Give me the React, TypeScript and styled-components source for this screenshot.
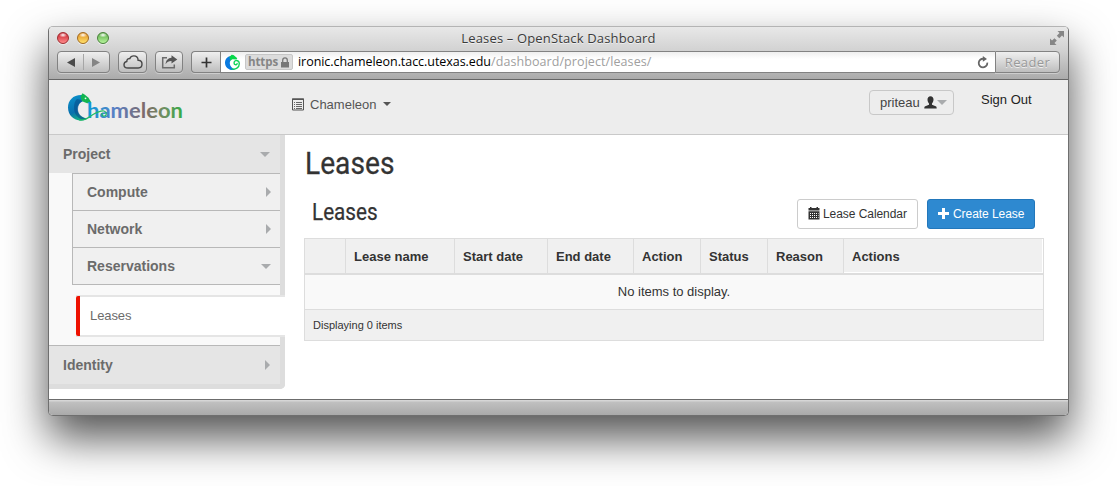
import React from "react";
import styled, { createGlobalStyle, css } from "styled-components";

const GlobalStyle = createGlobalStyle`
  *, *::before, *::after { box-sizing: border-box; }
  html, body { margin: 0; background: #fff; overflow: hidden; }
  body { font-family: "Liberation Sans", Arial, sans-serif; font-size: 13px; color: #333; }
  svg { display: block; flex: none; }
`;

const Desktop = styled.div`
  width: 1117px;
  height: 486px;
  padding: 26px 48px 0;
  overflow: hidden;
`;

const Window = styled.div`
  width: 1021px;
  height: 390px;
  display: flex;
  flex-direction: column;
  border: 1px solid #6f6f6f;
  border-top-color: #b4b4b4;
  border-radius: 5px;
  overflow: hidden;
  background: #fff;
  box-shadow: 0 22px 44px rgba(0, 0, 0, 0.68);
`;

const Chrome = styled.div`
  flex: none;
  height: 53px;
  background: linear-gradient(#e8e8e8, #d2d2d2 45%, #ababab);
  border-bottom: 1px solid #666;
`;

const TitleBar = styled.div`
  display: grid;
  grid-template-columns: 120px 1fr 120px;
  align-items: center;
  height: 24px;
`;

const Lights = styled.div`
  display: flex;
  gap: 8px;
  padding-left: 8px;
  margin-top: -2px;
`;

const Light = styled.span<{ $edge: string; $from: string; $to: string }>`
  width: 12px;
  height: 12px;
  border-radius: 50%;
  border: 1px solid ${(p) => p.$edge};
  background: radial-gradient(ellipse 4px 2.5px at 50% 20%, #fff, transparent),
    linear-gradient(${(p) => p.$from}, ${(p) => p.$to});
  box-shadow: 0 1px 0 rgba(255, 255, 255, 0.5);
`;

const WindowTitle = styled.div`
  font: 13px/22px "Open Sans", sans-serif;
  letter-spacing: 0.15px;
  margin-top: -2px;
  text-align: center;
  color: #3b3b3b;
  text-shadow: 0 1px 0 rgba(255, 255, 255, 0.6);
  white-space: nowrap;
`;

const Expand = styled.div`
  display: flex;
  justify-content: flex-end;
  padding-right: 4px;
  margin-top: -2px;
`;

const ToolRow = styled.div`
  display: flex;
  height: 22px;
  padding: 0 8px;
`;

const ToolButton = styled.div<{ $w: number; $gap?: number; $side?: "left" | "right" }>`
  width: ${(p) => p.$w}px;
  margin-right: ${(p) => p.$gap ?? 0}px;
  display: flex;
  align-items: center;
  justify-content: center;
  border: 1px solid #828282;
  border-radius: ${(p) => (p.$side === "left" ? "4px 0 0 4px" : p.$side === "right" ? "0 4px 4px 0" : "4px")};
  background: linear-gradient(#efefef, #bebebe);
  box-shadow: 0 1px 0 rgba(255, 255, 255, 0.35);
  ${(p) => p.$side === "left" && css`border-right-width: 0;`}
  color: #999;
  font: 13px/20px "Open Sans", sans-serif;
  letter-spacing: 0.4px;
  text-shadow: 0 1px 0 #eee;
`;

const AddressBar = styled.div`
  flex: 1;
  display: flex;
  align-items: center;
  padding: 0 6px 0 3px;
  border: 1px solid #828282;
  border-right: 0;
  background: linear-gradient(#efefef, #fff 35%);
  font: 12.5px/20px "Open Sans", sans-serif;
  white-space: nowrap;
`;

const Secure = styled.span`
  display: flex;
  align-items: center;
  gap: 3px;
  width: 48px;
  height: 16px;
  margin: 0 5px 0 4px;
  padding-left: 2px;
  border: 1px solid #c6c6c6;
  border-radius: 2px;
  background: #dcdcdc;
  color: #858585;
  font: bold 11.5px/14px "Open Sans", sans-serif;
  letter-spacing: -0.1px;
`;

const Domain = styled.span`
  color: #000;
  letter-spacing: -0.05px;
`;

const Path = styled.span`
  flex: 1;
  color: #a0a0a0;
  letter-spacing: 0.08px;
`;

const SiteHeader = styled.header`
  flex: none;
  display: flex;
  height: 55px;
  padding-left: 18px;
  background: #ededed;
  border-bottom: 1px solid #c9c9c9;
`;

const Brand = styled.div`
  width: 225px;
  padding-top: 11px;
`;

const ProjectPicker = styled.div`
  display: flex;
  align-items: center;
  height: 16px;
  margin-top: 16px;
  flex: 1;
  color: #555;
`;

const PickerLabel = styled.span`
  margin: 0 6px 0 5px;
`;

const UserButton = styled.div`
  display: flex;
  align-items: center;
  width: 85px;
  height: 25px;
  margin: 10px 27px 0 0;
  padding-left: 10px;
  border: 1px solid #c8c8c8;
  border-radius: 4px;
  color: #444;
`;

const UserName = styled.span`
  margin-right: 4px;
`;

const SignOut = styled.span`
  width: 87px;
  margin-top: 12px;
  line-height: 15px;
  color: #222;
`;

const Caret = styled.span<{ $dir: "down" | "right"; $size?: number; $color?: string }>`
  width: 0;
  height: 0;
  flex: none;
  border: ${(p) => p.$size ?? 5}px solid transparent;
  ${(p) =>
    p.$dir === "down"
      ? css`border-bottom: 0; border-top-color: ${p.$color ?? "#a9abad"};`
      : css`border-right: 0; border-left-color: ${p.$color ?? "#a9abad"};`}
`;

const Body = styled.div`
  flex: 1;
  display: flex;
  min-height: 0;
`;

const Sidebar = styled.nav`
  width: 236px;
  height: 254px;
  display: flex;
  flex-direction: column;
  border-radius: 0 0 5px 0;
  overflow: hidden;
  color: #6b6b6b;
  font-size: 14px;
  font-weight: bold;
`;

const Section = styled.div<{ $last?: boolean }>`
  display: flex;
  align-items: center;
  justify-content: space-between;
  height: ${(p) => (p.$last ? 44 : 38)}px;
  padding: 0 10px 0 14px;
  background: #e5e5e5;
  border-right: 5px solid #ddd;
  ${(p) =>
    p.$last &&
    css`
      border-bottom: 5px solid #ddd;
      box-shadow: inset 0 1px 0 #b8b8b8;
    `}
`;

const Submenu = styled.div`
  padding-left: 23px;
  background: #f9f9f9;
  border-right: 5px solid #ddd;
`;

const SubItem = styled.div`
  display: flex;
  align-items: center;
  justify-content: space-between;
  height: 37px;
  padding: 0 9px 0 14px;
  background: #f0f0f0;
  border-top: 1px solid #b8b8b8;
  border-left: 1px solid #b8b8b8;
  &:last-child { height: 38px; border-bottom: 1px solid #b8b8b8; }
`;

const Spacer = styled.div<{ $h: number }>`
  height: ${(p) => p.$h}px;
  background: #f9f9f9;
  border-right: 5px solid #ddd;
`;

const ActiveWrap = styled.div`
  padding-left: 27px;
  background: #f9f9f9;
`;

const ActiveLink = styled.div`
  position: relative;
  height: 42px;
  padding-left: 14px;
  border: solid #e5e5e5;
  border-width: 2px 0;
  background: #fff;
  font-size: 13px;
  font-weight: normal;
  letter-spacing: -0.1px;
  line-height: 37px;
  &::before {
    content: "";
    position: absolute;
    left: 0;
    top: -1px;
    width: 4px;
    height: 40px;
    border-radius: 2px 0 0 2px;
    background: #ee1100;
  }
`;

const Main = styled.main`
  flex: 1;
  padding: 10px 24px 0 19px;
`;

const PageTitle = styled.h1`
  margin: 0 0 0 1px;
  height: 37px;
  font: 400 32px/36px Roboto, sans-serif;
  transform: scaleX(0.88);
  transform-origin: left;
  -webkit-text-stroke: 0.3px #333;
`;

const TableBar = styled.div`
  display: flex;
  height: 56px;
  padding: 17px 9px 0 8px;
`;

const TableTitle = styled.h2`
  flex: 1;
  margin: 0;
  font: 400 23.5px/27px Roboto, sans-serif;
  transform: scaleX(0.88);
  transform-origin: left;
  -webkit-text-stroke: 0.25px #333;
`;

const Button = styled.button<{ $primary?: boolean }>`
  display: flex;
  align-items: center;
  flex: none;
  height: 30px;
  width: ${(p) => (p.$primary ? 108 : 121)}px;
  margin-left: ${(p) => (p.$primary ? 9 : 0)}px;
  padding: 0 0 1px 10px;
  gap: ${(p) => (p.$primary ? 4 : 3)}px;
  border: 1px solid ${(p) => (p.$primary ? "#2277bb" : "#ccc")};
  border-radius: 3px;
  background: ${(p) => (p.$primary ? "#2e89d0" : "#fff")};
  color: ${(p) => (p.$primary ? "#fff" : "#333")};
  font: 12px "Liberation Sans", Arial, sans-serif;
  letter-spacing: -0.06px;
  white-space: nowrap;
`;

const Table = styled.div`
  width: 740px;
  border: 1px solid #ddd;
`;

const HeadRow = styled.div`
  display: grid;
  grid-template-columns: 40px 109px 93px 86px 67px 67px 76px 1fr;
  grid-template-rows: 34px;
  height: 36px;
  background: #f0f0f0;
  border-bottom: 2px solid #ddd;
  font-weight: bold;
  line-height: 35px;
`;

const HeadCell = styled.div`
  padding-left: 8px;
  & + & { border-left: 1px solid #ddd; }
  &:last-child { box-shadow: inset -1px -1px 0 #fff; }
`;

const EmptyRow = styled.div`
  height: 34px;
  background: #f9f9f9;
  text-align: center;
  line-height: 33px;
`;

const FootRow = styled.div`
  height: 31px;
  padding-left: 8px;
  border-top: 1px solid #ddd;
  background: #f0f0f0;
  font-size: 11px;
  line-height: 30px;
`;

const StatusBar = styled.div`
  flex: none;
  height: 16px;
  border-top: 1px solid #6c6c6c;
  background: linear-gradient(#d6d6d6 1px, #c0c0c0 2px, #aaa);
`;

const CloudIcon = () => (
  <svg width="20" height="14" viewBox="0 0 20 14" fill="none" stroke="#484848" strokeWidth="1.4">
    <path d="M5 13C2.5 13 1 11.6 1 9.7c0-1.7 1.1-2.9 2.8-3.2C3.7 4.5 5 3.2 6.7 3.7 7.500 1.8 9 .9 10.800.9c2.500 0 4.200 1.800 4.300 4.300 2.300 0 3.900 1.700 3.900 3.900S17.500 13 15.300 13z" />
  </svg>
);

const ShareIcon = () => (
  <svg width="17" height="14" viewBox="0 0 17 14">
    <path d="M6 2.700H1.700v10h11.600V9.500" fill="none" stroke="#6c6c6c" strokeWidth="1.500" />
    <path d="M10.500.300 16.300 4.400 10.500 8.600V6C8 5.900 6 7 4.600 9.300 4.800 5.600 7 3 10.500 2.800z" fill="#555" />
  </svg>
);

const Favicon = () => (
  <svg width="17" height="17" viewBox="0 0 17 17" fill="none">
    <path d="M7 2C3 2.500 1 5.500 1 8.700 1 13 4.500 16 8.500 16c1 0 2-.2 2.600-.6C8 14.500 5.800 12 5.800 9.200c0-2 1-3.700 2.700-4.700z" fill="#0a7be0" />
    <path d="M5.500 3 7.500.8 9.500 1l3.800 3.200-1 1.300-3.600-.2c-1.200.4-1.700 1-2.200 1.700z" fill="#08d84a" />
    <path d="M7.500 14.800c4 1.200 7.800-1.300 7.800-5 0-2.400-1.800-3.600-3.600-3.100-2.200.6-2.200 3.900 0 4.100 1.200.1 1.700-1 1.200-1.800" stroke="#10d45a" strokeWidth="1.400" />
  </svg>
);

const ChameleonLogo = () => (
  <svg width="118" height="32" viewBox="0 0 118 32">
    <defs>
      <linearGradient id="word" gradientUnits="userSpaceOnUse" x1="20" y1="0" x2="116" y2="0">
        <stop offset="0" stopColor="#0a9bd6" />
        <stop offset=".3" stopColor="#5b7fc4" />
        <stop offset=".6" stopColor="#7d6a68" />
        <stop offset=".8" stopColor="#6f8f62" />
        <stop offset="1" stopColor="#35ad45" />
      </linearGradient>
      <linearGradient id="body" x1="0" y1="0" x2=".3" y2="1">
        <stop offset="0" stopColor="#0b93cc" />
        <stop offset=".7" stopColor="#0870ae" />
        <stop offset="1" stopColor="#12a98a" />
      </linearGradient>
    </defs>
    <path d="M14 4C6 4 1 9.500 1 16.500 1 24 6.500 29.500 14 29.500c3 0 5-.7 7-2C14 27 10.500 23 10.500 18c0-4 2.500-7 6.500-8.500l5-.5-4-4.500z" fill="url(#body)" />
    <path d="M10 8C6.500 11 6 19 9 24c1.500 2.300 4 4 6.500 4.500 1.500 0 3-.3 4.500-1-6-1-9-5-9-9.500 0-4 2-7 6-8.500z" fill="#074f8c" opacity=".6" />
    <path d="M13.500 5.500 15.500 2.300l2 1.200 4 3.200 2.500 4.300-1 1.300c-3 .2-6-.8-8.500-2.800z" fill="#11b451" />
    <circle cx="18.500" cy="7.300" r=".9" fill="#e7ffe9" />
    <text x="20" y="27" textLength="96" lengthAdjust="spacingAndGlyphs" fontFamily="Lato, sans-serif" fontWeight="700" fontSize="20" fill="url(#word)">hameleon</text>
    <path d="M12 29c7 1 10-3 14-5.500 4-2.300 8-4.500 11-3.500s3 4.500.5 5-3.500-2-2-3" fill="none" stroke="#20bb65" strokeWidth="1.200" />
  </svg>
);

const ListIcon = () => (
  <svg width="13" height="13" viewBox="0 0 13 13">
    <path d="M.5 1h11v11H.5z" fill="none" stroke="#555" />
    <path d="M0 .5h12v1.500H0z" fill="#555" />
    <path d="M2 4.500h1M4 4.500h6M2 6.500h1M4 6.500h6M2 8.500h1M4 8.500h6M2 10.500h1M4 10.500h6" stroke="#666" />
  </svg>
);

const UserIcon = () => (
  <svg width="13" height="13" viewBox="0 0 13 13" fill="#333">
    <path d="M6.500.300c1.900 0 3 1.300 3 3.200 0 1.700-.7 3.100-1.500 3.900v1.300l3.700 1.500c.8.400 1 1.100 1 2.300H.3c0-1.200.2-1.900 1-2.300L5 8.700V7.400C4.200 6.600 3.500 5.200 3.500 3.500c0-1.900 1.100-3.200 3-3.200z" />
  </svg>
);

const CalendarIcon = () => (
  <svg width="12" height="13" viewBox="0 0 12 13">
    <path d="M2 0h1.500v1h5V0H10v1h1.500v2.500H.5V1H2zM.5 4.200h11V12.500H.5z" fill="#333" />
    <path d="M2 6.500h8.500M2 8.500h8.500M2 10.500h8.500" stroke="#fff" strokeWidth="1" strokeDasharray="1 1" />
  </svg>
);

const columns = ["", "Lease name", "Start date", "End date", "Action", "Status", "Reason", "Actions"];

export default function App() {
  return (
    <Desktop>
      <GlobalStyle />
      <Window>
        <Chrome>
          <TitleBar>
            <Lights>
              <Light $edge="#9f2b30" $from="#c9212c" $to="#ff8b8b" />
              <Light $edge="#a26a20" $from="#e08d20" $to="#ffe16b" />
              <Light $edge="#48813a" $from="#5cab48" $to="#b6f49c" />
            </Lights>
            <WindowTitle>Leases – OpenStack Dashboard</WindowTitle>
            <Expand>
              <svg width="14" height="14" viewBox="0 0 14 14" fill="#868686">
                <path d="M7.500 0H14v6.500l-2-2L9.300 7.200 6.800 4.700 9.500 2zM0 7.500l2 2 2.500-2.300L6.800 9.500 4.500 12l2 2H0z" />
              </svg>
            </Expand>
          </TitleBar>
          <ToolRow>
            <ToolButton $w={53} $gap={8}>
              <svg width="51" height="20" viewBox="0 0 51 20">
                <path d="M9 10.500 17 6v9z" fill="#4b4b4b" />
                <path d="M25.500 2v16" stroke="#a6a6a6" />
                <path d="M42 10.500 34 6v9z" fill="#858585" />
              </svg>
            </ToolButton>
            <ToolButton $w={29} $gap={8}><CloudIcon /></ToolButton>
            <ToolButton $w={28} $gap={8}><ShareIcon /></ToolButton>
            <ToolButton $w={29} $side="left">
              <svg width="11" height="11" viewBox="0 0 11 11"><path d="M5.500.500v10M.500 5.500h10" stroke="#333" strokeWidth="1.700" /></svg>
            </ToolButton>
            <AddressBar>
              <Favicon />
              <Secure>
                https
                <svg width="8" height="11" viewBox="0 0 8 11">
                  <path d="M0 5h8v5.500H0z" fill="#777" />
                  <path d="M1.700 5V3.200a2.300 2.300 0 0 1 4.600 0V5" fill="none" stroke="#777" strokeWidth="1.300" />
                </svg>
              </Secure>
              <Domain>ironic.chameleon.tacc.utexas.edu</Domain>
              <Path>/dashboard/project/leases/</Path>
              <svg width="12" height="13" viewBox="0 0 12 13">
                <path d="M10.300 6.700A4.300 4.300 0 1 1 6.500 2.800" fill="none" stroke="#666" strokeWidth="1.800" />
                <path d="M5.800 0 10 2.900 5.800 5.700z" fill="#666" />
              </svg>
            </AddressBar>
            <ToolButton $w={65} $side="right">Reader</ToolButton>
          </ToolRow>
        </Chrome>
        <SiteHeader>
          <Brand><ChameleonLogo /></Brand>
          <ProjectPicker>
            <ListIcon />
            <PickerLabel>Chameleon</PickerLabel>
            <Caret $dir="down" $size={4} $color="#555" />
          </ProjectPicker>
          <UserButton>
            <UserName>priteau</UserName>
            <UserIcon />
            <Caret $dir="down" />
          </UserButton>
          <SignOut>Sign Out</SignOut>
        </SiteHeader>
        <Body>
          <Sidebar>
            <Section>Project<Caret $dir="down" /></Section>
            <Submenu>
              <SubItem>Compute<Caret $dir="right" /></SubItem>
              <SubItem>Network<Caret $dir="right" /></SubItem>
              <SubItem>Reservations<Caret $dir="down" /></SubItem>
            </Submenu>
            <Spacer $h={10} />
            <ActiveWrap><ActiveLink>Leases</ActiveLink></ActiveWrap>
            <Spacer $h={8} />
            <Section $last>Identity<Caret $dir="right" /></Section>
          </Sidebar>
          <Main>
            <PageTitle>Leases</PageTitle>
            <TableBar>
              <TableTitle>Leases</TableTitle>
              <Button><CalendarIcon />Lease Calendar</Button>
              <Button $primary>
                <svg width="11" height="11" viewBox="0 0 11 11"><path d="M5.500 0v11M0 5.500h11" stroke="#fff" strokeWidth="3" /></svg>
                Create Lease
              </Button>
            </TableBar>
            <Table>
              <HeadRow>{columns.map((name) => <HeadCell key={name}>{name}</HeadCell>)}</HeadRow>
              <EmptyRow>No items to display.</EmptyRow>
              <FootRow>Displaying 0 items</FootRow>
            </Table>
          </Main>
        </Body>
        <StatusBar />
      </Window>
    </Desktop>
  );
}
